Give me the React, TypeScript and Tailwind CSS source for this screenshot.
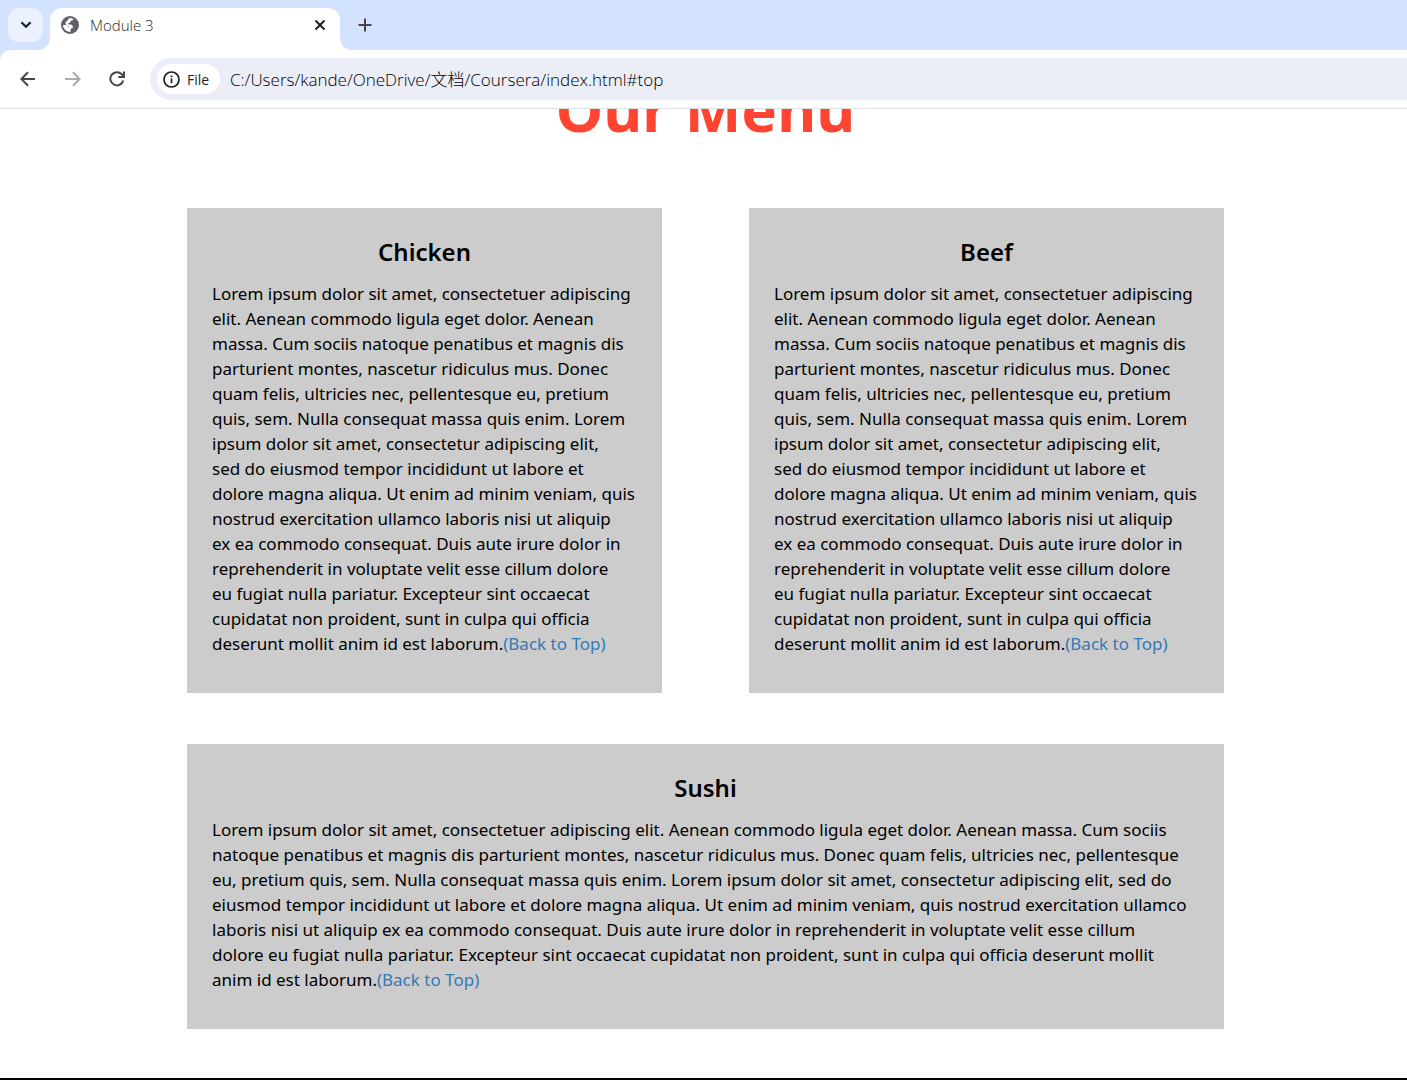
import { Fragment } from "react";

const columnLines = [
  "Lorem ipsum dolor sit amet, consectetuer adipiscing",
  "elit. Aenean commodo ligula eget dolor. Aenean",
  "massa. Cum sociis natoque penatibus et magnis dis",
  "parturient montes, nascetur ridiculus mus. Donec",
  "quam felis, ultricies nec, pellentesque eu, pretium",
  "quis, sem. Nulla consequat massa quis enim. Lorem",
  "ipsum dolor sit amet, consectetur adipiscing elit,",
  "sed do eiusmod tempor incididunt ut labore et",
  "dolore magna aliqua. Ut enim ad minim veniam, quis",
  "nostrud exercitation ullamco laboris nisi ut aliquip",
  "ex ea commodo consequat. Duis aute irure dolor in",
  "reprehenderit in voluptate velit esse cillum dolore",
  "eu fugiat nulla pariatur. Excepteur sint occaecat",
  "cupidatat non proident, sunt in culpa qui officia",
  "deserunt mollit anim id est laborum.",
];

const wideLines = [
  "Lorem ipsum dolor sit amet, consectetuer adipiscing elit. Aenean commodo ligula eget dolor. Aenean massa. Cum sociis",
  "natoque penatibus et magnis dis parturient montes, nascetur ridiculus mus. Donec quam felis, ultricies nec, pellentesque",
  "eu, pretium quis, sem. Nulla consequat massa quis enim. Lorem ipsum dolor sit amet, consectetur adipiscing elit, sed do",
  "eiusmod tempor incididunt ut labore et dolore magna aliqua. Ut enim ad minim veniam, quis nostrud exercitation ullamco",
  "laboris nisi ut aliquip ex ea commodo consequat. Duis aute irure dolor in reprehenderit in voluptate velit esse cillum",
  "dolore eu fugiat nulla pariatur. Excepteur sint occaecat cupidatat non proident, sunt in culpa qui officia deserunt mollit",
  "anim id est laborum.",
];

function MenuCard({ title, lines, className }: { title: string; lines: string[]; className?: string }) {
  return (
    <section className={`bg-[#cccccc] px-[25px] pt-7 pb-[37px] ${className ?? ""}`}>
      <h2 className="text-center text-2xl leading-8 font-semibold">{title}</h2>
      <p className="mt-[13px] text-[17px] leading-[25px] whitespace-nowrap">
        {lines.map((line, i) => (
          <Fragment key={i}>
            {line}
            {i < lines.length - 1 && <br />}
          </Fragment>
        ))}
        <a href="#top" className="text-[#337ab7]">(Back to Top)</a>
      </p>
    </section>
  );
}

function TabStrip() {
  return (
    <div className="flex h-[50px] items-end bg-[#d3e3fd] pl-2">
      <button aria-label="Search tabs" className="mb-2 flex h-[34px] w-[35px] items-center justify-center rounded-[11px] bg-[#ebf1fe]">
        <svg width="12" height="8" viewBox="0 0 12 8" fill="none" stroke="#1f1f1f" strokeWidth="2.2">
          <path d="M1.4 1.2 6 5.8l4.6-4.6" />
        </svg>
      </button>
      <div className="relative ml-[7px] flex h-[42px] w-[290px] items-center rounded-t-[12px] bg-white pr-[14px] pb-2 pl-[11px]">
        <svg className="absolute bottom-0 -left-3" width="12" height="12" viewBox="0 0 12 12" fill="#fff">
          <path d="M12 0v12H0A12 12 0 0 0 12 0Z" />
        </svg>
        <svg className="absolute -right-3 bottom-0" width="12" height="12" viewBox="0 0 12 12" fill="#fff">
          <path d="M0 0v12h12A12 12 0 0 1 0 0Z" />
        </svg>
        <svg width="18" height="18" viewBox="0 0 18 18">
          <circle cx="9" cy="9" r="9" fill="#5f6368" />
          <path d="M9.500 2C11 2.200 12 2.700 12.200 3.300c0 1-.8 1.400-2 1.500-.7.200-.6 1.300-1.400 1.900-.8.500-1.700.200-1.700 1.100 0 .7.900.7 2.100.7 1.700 0 2.700 1 2.700 2.300 0 1-.7 1.700-1.700 1.800-.5.800-.9 2.300-.9 3.300C5.300 15.900 2.100 12.800 2 9h3c1.300 0 2 .8 2.200 1.800.6-.2.900-.5.9-.9-2-.2-3.600-1-3.600-2.600C4.500 5.300 6.700 5 7.200 3.600 7.500 2.700 8.200 2 9.500 2Z" fill="#fff" />
        </svg>
        <span className="ml-[11px] flex-1 text-[15px] leading-5 font-light text-[#1f1f1f]">Module 3</span>
        <button aria-label="Close tab">
          <svg width="12" height="12" viewBox="0 0 12 12" fill="none" stroke="#1f1f1f" strokeWidth="2">
            <path d="m1.500 1.500 9 9M10.500 1.500l-9 9" />
          </svg>
        </button>
      </div>
      <button aria-label="New tab" className="mb-[18px] ml-[18px]">
        <svg width="14" height="14" viewBox="0 0 14 14" fill="none" stroke="#474747" strokeWidth="2">
          <path d="M7 .5v13M.5 7h13" />
        </svg>
      </button>
    </div>
  );
}

function Toolbar() {
  return (
    <div className="bg-[#d3e3fd]">
      <div className="flex h-[59px] items-center rounded-tl-[10px] border-b border-[#dfe0e2] bg-white pl-5">
        <button aria-label="Back">
          <svg width="16" height="16" viewBox="0 0 16 16" fill="none" stroke="#474747" strokeWidth="2">
            <path d="M15 8H2M8 1.200 1.400 8 8 14.800" />
          </svg>
        </button>
        <button aria-label="Forward" className="ml-[29px]">
          <svg width="16" height="16" viewBox="0 0 16 16" fill="none" stroke="#ababab" strokeWidth="2">
            <path d="M0 8h14M8 1.200 14.600 8 8 14.800" />
          </svg>
        </button>
        <button aria-label="Reload" className="ml-7">
          <svg width="16" height="16" viewBox="0 0 16 16" fill="none" stroke="#474747" strokeWidth="2">
            <path d="M14.300 9.500A6.600 6.600 0 1 1 12.800 3.300l1.700 1.900M15 .5v5.600H9.300" />
          </svg>
        </button>
        <div className="ml-[25px] flex h-[42px] flex-1 items-center rounded-l-full bg-[#ebeef7] pl-[7px]">
          <button className="flex h-[30px] w-[63px] items-center rounded-full bg-white pl-[6px] text-[14px] text-[#1f1f1f]">
            <svg width="17" height="17" viewBox="0 0 17 17" fill="none" stroke="#1f1f1f" strokeWidth="1.700">
              <circle cx="8.500" cy="8.500" r="7.500" />
              <path d="M8.500 7.600v4.600M8.500 4.600v1.700" />
            </svg>
            <span className="ml-[7px]">File</span>
          </button>
          <input
            aria-label="Address"
            defaultValue="C:/Users/kande/OneDrive/文档/Coursera/index.html#top"
            className="ml-[10px] h-8 min-w-0 flex-1 bg-transparent pb-0.5 text-[17px] font-light text-black outline-none"
          />
        </div>
      </div>
    </div>
  );
}

export default function App() {
  return (
    <div className="flex min-h-screen flex-col border-b-2 border-black bg-white">
      <header className="font-['Segoe_UI','Open_Sans','Noto_Sans_CJK_SC',sans-serif]">
        <TabStrip />
        <Toolbar />
      </header>
      <main className="flex-1 overflow-hidden pb-12 pl-1 font-['Comic_Sans_MS','Noto_Sans',sans-serif] text-black">
        <div className="mx-auto max-w-[1037px]">
          <h1 className="-mt-10 text-center text-[60px] leading-[80px] font-bold text-[#ff4532]">Our Menu</h1>
          <div className="mt-[59px] grid grid-cols-2 gap-x-[87px] gap-y-[51px]">
            <MenuCard title="Chicken" lines={columnLines} />
            <MenuCard title="Beef" lines={columnLines} />
            <MenuCard title="Sushi" lines={wideLines} className="col-span-2" />
          </div>
        </div>
      </main>
    </div>
  );
}
